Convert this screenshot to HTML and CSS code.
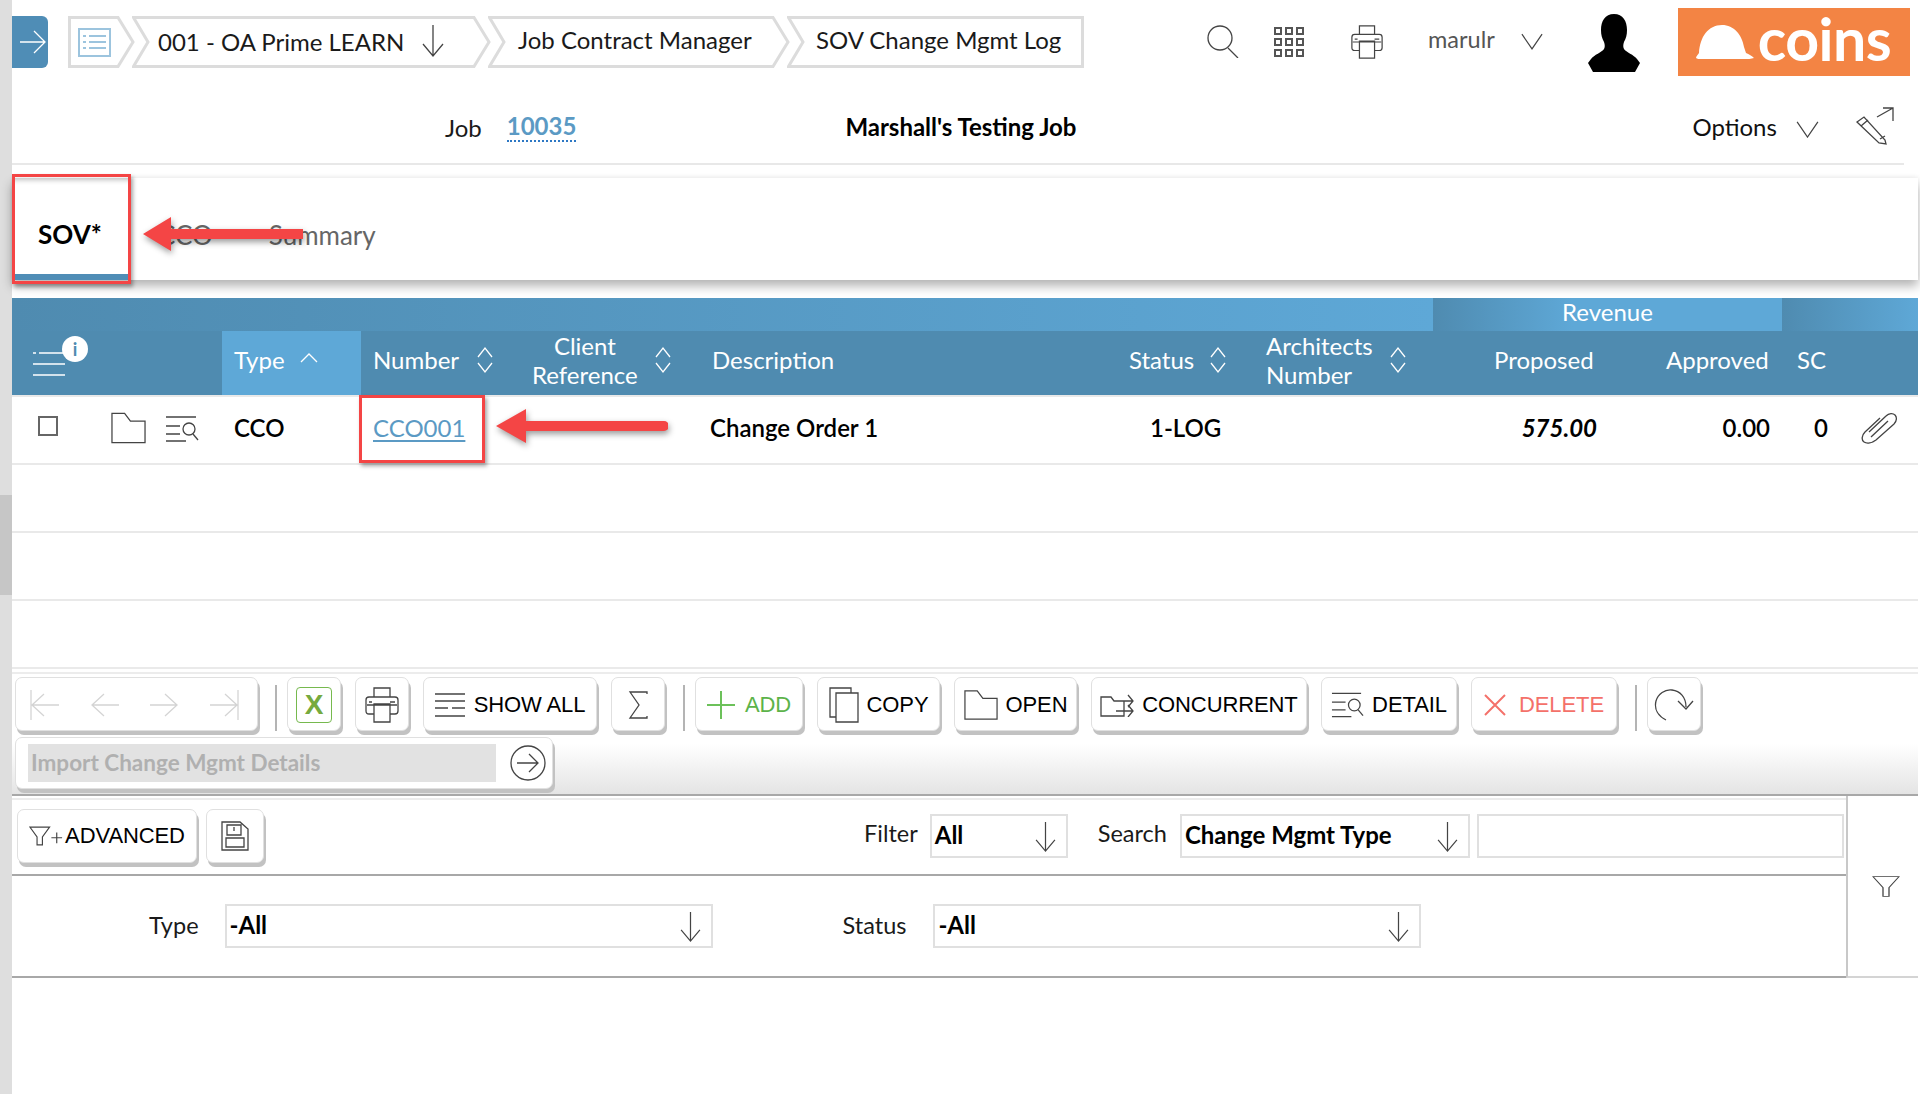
FILE: index.html
```html
<!DOCTYPE html>
<html lang="en">
<head>
<meta charset="utf-8">
<title>SOV Change Mgmt Log</title>
<link rel="stylesheet" href="styles.css">
</head>
<body>
<svg class="defs" width="0" height="0" aria-hidden="true">
  <symbol id="i-down" viewBox="0 0 24 34"><path d="M12 1v31M2 20l10 12 10-12"/></symbol>
  <symbol id="i-chev" viewBox="0 0 24 18"><path d="M1 1l11 16L23 1"/></symbol>
  <symbol id="i-sort" viewBox="0 0 18 28"><path d="M2 11l7-9 7 9M2 17l7 9 7-9"/></symbol>
  <symbol id="i-print" viewBox="0 0 36 36"><path d="M10 10V1h16v9M2 24V13q0-3 3-3h26q3 0 3 3v11q0 3-3 3h-5M10 27H5q-3 0-3-3M10 17h16v18H10zM5 15h3M26 15h5M3 18h30"/></symbol>
  <symbol id="i-detail" viewBox="0 0 34 26"><path d="M1 1h30M1 10h14M1 18h14M1 25h20"/><circle cx="24" cy="13" r="6"/><path d="M28 18l5 6"/></symbol>
  <symbol id="i-folder" viewBox="0 0 36 32"><path d="M1 1h13l6 8h15v22H1z"/></symbol>
  <symbol id="i-funnel" viewBox="0 0 28 36"><path d="M1 1h26L17 20v15h-6V20z"/></symbol>
</svg>
<div class="app">
  <aside class="rail"><div class="rail-thumb"></div></aside>
  <main class="main">
    <header class="topbar">
      <button class="menu-toggle"><svg class="ico" width="26" height="24" viewBox="0 0 26 24"><path class="white" d="M0 12h25M14 1l11 11-11 11"/></svg></button>
      <nav class="crumbs">
        <div class="crumb crumb-home">
          <svg class="crumb-shape" viewBox="0 0 67 52"><path d="M1.500 1.500H50L65 26 50 50.500H1.500z"/></svg>
          <svg class="ico list-ico" width="33" height="29" viewBox="0 0 33 29"><path class="blue" d="M1 1h31v27H1zM5 8h3M11 8h17M5 14h3M11 14h17M5 20h3M11 20h17"/></svg>
        </div>
        <div class="crumb crumb-job">
          <svg class="crumb-shape" viewBox="0 0 359 52"><path d="M1.500 1.500H342L357 26 342 50.500H1.500L16 26z"/></svg>
          <span class="crumb-text">001 - OA Prime LEARN</span>
          <svg class="ico down-sm"><use href="#i-down"/></svg>
        </div>
        <div class="crumb crumb-mgr">
          <svg class="crumb-shape" viewBox="0 0 302 52"><path d="M1.500 1.500H285L300 26 285 50.500H1.500L16 26z"/></svg>
          <span class="crumb-text">Job Contract Manager</span>
        </div>
        <div class="crumb crumb-log">
          <svg class="crumb-shape" viewBox="0 0 297 52"><path d="M1.500 1.500H295.500V50.500H1.500L16 26z"/></svg>
          <span class="crumb-text">SOV Change Mgmt Log</span>
        </div>
      </nav>
      <div class="top-tools">
        <svg class="ico tool-search" width="33" height="33" viewBox="0 0 33 33"><circle cx="13" cy="13" r="12"/><path d="M21 23l10 10"/></svg>
        <svg class="ico tool-grid" width="30" height="30" viewBox="0 0 30 30"><path class="heavy" d="M1 1h6v6H1zM12 1h6v6h-6zM23 1h6v6h-6zM1 12h6v6H1zM12 12h6v6h-6zM23 12h6v6h-6zM1 23h6v6H1zM12 23h6v6h-6zM23 23h6v6h-6z"/></svg>
        <svg class="ico tool-print" width="34" height="34"><use href="#i-print"/></svg>
        <span class="user-name">marulr</span>
        <svg class="ico tool-chev" width="22" height="17"><use href="#i-chev"/></svg>
        <svg class="avatar" width="52" height="58" viewBox="0 0 52 58"><path d="M26 0c9 0 13 7 13 16 0 5-1 8-3 12-1 3-1 5 0 7 2 3 10 6 13 10l3 4-5 9H5l-5-9 3-4c3-4 11-7 13-10 1-2 1-4 0-7-2-4-3-7-3-12C13 7 17 0 26 0z"/></svg>
        <div class="logo">
          <svg class="logo-hat" width="58" height="34" viewBox="0 0 58 34"><path d="M0 33c0-2 2-3 3-5C4 12 12 0 26 0c12 0 20 10 22 22l2 6c3 1 6 3 8 5-3 1-6 1-10 1H6c-3 0-5 0-6-1z"/></svg>
          <span class="logo-text">coins</span>
        </div>
      </div>
    </header>

    <section class="jobbar">
      <span class="job-label">Job</span>
      <a class="job-link">10035</a>
      <strong class="job-name">Marshall's Testing Job</strong>
      <span class="options">Options</span>
      <svg class="ico options-chev" width="23" height="17"><use href="#i-chev"/></svg>
      <svg class="ico pencil" width="40" height="38" viewBox="0 0 40 38"><path d="M1 15l7-5 21 23 1 4-7-1zM5 19l7-6M24 32l5-3M21 10L37 1M27 1h10v13"/></svg>
    </section>

    <section class="tabs">
      <div class="tab tab-active">SOV*</div>
      <div class="tab tab-cco">CCO</div>
      <div class="tab tab-summary">Summary</div>
    </section>

    <section class="grid">
      <div class="band">
        <div class="band-left"></div>
        <div class="band-rev">Revenue</div>
        <div class="band-right"></div>
      </div>
      <div class="cols head">
        <div class="c-icons"><svg class="ico settings" width="34" height="26" viewBox="0 0 34 26"><path class="white" d="M1 2h3M7 2h26M1 13h32M1 24h32"/></svg><span class="info">i</span></div>
        <div class="c-type sorted">Type<svg class="ico sort-up" width="18" height="10" viewBox="0 0 18 10"><path class="white" d="M1 9l8-8 8 8"/></svg></div>
        <div class="c-num">Number<svg class="ico sort"><use class="white" href="#i-sort"/></svg></div>
        <div class="c-client"><span class="two-line center">Client<br>Reference</span><svg class="ico sort"><use class="white" href="#i-sort"/></svg></div>
        <div class="c-desc">Description</div>
        <div class="c-status">Status<svg class="ico sort"><use class="white" href="#i-sort"/></svg></div>
        <div class="c-arch"><span class="two-line">Architects<br>Number</span><svg class="ico sort"><use class="white" href="#i-sort"/></svg></div>
        <div class="c-prop">Proposed</div>
        <div class="c-appr">Approved</div>
        <div class="c-sc">SC</div>
        <div class="c-clip"></div>
      </div>
      <div class="cols row">
        <div class="c-icons">
          <span class="check"></span>
          <svg class="ico row-folder" width="35" height="32"><use href="#i-folder"/></svg>
          <svg class="ico row-detail" width="34" height="26"><use href="#i-detail"/></svg>
        </div>
        <div class="c-type">CCO</div>
        <div class="c-num"><a class="row-link">CCO001</a></div>
        <div class="c-client"></div>
        <div class="c-desc cell-desc">Change Order 1</div>
        <div class="c-status cell-status">1-LOG</div>
        <div class="c-arch"></div>
        <div class="c-prop cell-num cell-italic">575.00</div>
        <div class="c-appr cell-num">0.00</div>
        <div class="c-sc cell-num">0</div>
        <div class="c-clip"><svg class="ico clip" width="38" height="32" viewBox="0 0 38 32"><path d="M9 20L26 4c3-3 7-3 9-1s2 6-1 9L16 28c-4 3-9 4-12 2s-2-7 1-10L20 6M11 25L28 9"/></svg></div>
      </div>
      <div class="row row-empty"></div>
      <div class="row row-empty"></div>
      <div class="row row-empty"></div>
    </section>

    <section class="toolbar">
      <div class="tool-row">
        <div class="btn nav-group">
          <svg class="ico muted" width="30" height="30" viewBox="0 0 30 30"><path d="M1 0v30M29 15H2M14 4L2 15l12 11"/></svg>
          <svg class="ico muted" width="30" height="30" viewBox="0 0 30 30"><path d="M29 15H2M14 4L2 15l12 11"/></svg>
          <svg class="ico muted" width="30" height="30" viewBox="0 0 30 30"><path d="M1 15h27M16 4l12 11-12 11"/></svg>
          <svg class="ico muted" width="30" height="30" viewBox="0 0 30 30"><path d="M29 0v30M1 15h27M16 4l12 11-12 11"/></svg>
        </div>
        <span class="sep"></span>
        <div class="btn btn-icon"><span class="excel">X</span></div>
        <div class="btn btn-icon"><svg class="ico" width="36" height="36"><use href="#i-print"/></svg></div>
        <div class="btn btn-show"><svg class="ico" width="30" height="24" viewBox="0 0 30 24"><path d="M0 1h30M0 8h30M0 15h13M17 15h13M0 23h30"/></svg>SHOW ALL</div>
        <div class="btn btn-icon"><svg class="ico" width="20" height="28" viewBox="0 0 20 28"><path d="M19 3V1H2l9 13L2 27h17v-2"/></svg></div>
        <span class="sep"></span>
        <div class="btn btn-add"><svg class="ico" width="28" height="28" viewBox="0 0 28 28"><path class="green" d="M14 0v28M0 14h28"/></svg>ADD</div>
        <div class="btn btn-copy"><svg class="ico" width="30" height="36" viewBox="0 0 30 36"><path d="M7 30H1V1h21v5M7 6h22v29H7z"/></svg>COPY</div>
        <div class="btn btn-open"><svg class="ico" width="34" height="32"><use href="#i-folder"/></svg>OPEN</div>
        <div class="btn btn-conc"><svg class="ico" width="34" height="24" viewBox="0 0 34 24"><path d="M1 4h10l3 4h10v15H1zM16 8h17M28 2l5 6-5 6M16 18h17M28 12l5 6-5 6"/></svg>CONCURRENT</div>
        <div class="btn btn-detail"><svg class="ico" width="33" height="26"><use href="#i-detail"/></svg>DETAIL</div>
        <div class="btn btn-delete"><svg class="ico" width="22" height="22" viewBox="0 0 22 22"><path class="red" d="M1 1l20 20M21 1L1 21"/></svg>DELETE</div>
        <span class="sep"></span>
        <div class="btn btn-icon"><svg class="ico" width="40" height="32" viewBox="0 0 40 32"><path d="M12 31C4 27 0 20 2 12 4 5 11 0 18 1c8 1 14 7 14 17M24 12l8 8 7-8"/></svg></div>
      </div>
      <div class="btn import">
        <div class="import-input">Import Change Mgmt Details</div>
        <svg class="ico" width="36" height="36" viewBox="0 0 36 36"><ellipse cx="18" cy="18" rx="17" ry="17"/><path d="M7 18h21M19 9l9 9-9 9"/></svg>
      </div>
    </section>

    <section class="filters">
      <div class="filters-body">
        <div class="filter-row">
          <div class="btn btn-adv"><svg class="ico" width="34" height="22" viewBox="0 0 38 22"><path d="M1 1h22l-8 11v9h-6v-9zM25 13h12M31 7v12"/></svg>ADVANCED</div>
          <div class="btn btn-save"><svg class="ico" width="28" height="30" viewBox="0 0 28 30"><path d="M1 1h18l8 7v21H1zM6 4h14v10H6zM13 6v4M5 17h18v9H5z"/></svg></div>
          <label class="f-label f-label-filter">Filter</label>
          <div class="select s-filter"><span>All</span><svg class="ico down"><use href="#i-down"/></svg></div>
          <label class="f-label f-label-search">Search</label>
          <div class="select s-search"><span>Change Mgmt Type</span><svg class="ico down"><use href="#i-down"/></svg></div>
          <div class="select s-text"></div>
        </div>
        <div class="type-row">
          <label class="f-label f-label-type">Type</label>
          <div class="select s-wide"><span>-All</span><svg class="ico down"><use href="#i-down"/></svg></div>
          <label class="f-label f-label-status">Status</label>
          <div class="select s-wide"><span>-All</span><svg class="ico down"><use href="#i-down"/></svg></div>
        </div>
      </div>
      <div class="filters-side"><svg class="ico" width="28" height="21" viewBox="0 0 28 36" preserveAspectRatio="none"><use href="#i-funnel"/></svg></div>
    </section>
  </main>

  <div class="mark mark-tab"></div>
  <div class="mark mark-num"></div>
  <svg class="arrow arrow-tab" width="160" height="36" viewBox="0 0 160 36"><path d="M0 18L28 1v12h132v10H28v12z"/></svg>
  <svg class="arrow arrow-num" width="172" height="36" viewBox="0 0 172 36"><path d="M0 18L30 1v12h138a5 5 0 010 10H30v12z"/></svg>
</div>
</body>
</html>
```

FILE: styles.css
```css
* { box-sizing: border-box; }
html, body { margin: 0; padding: 0; background: #fff; }
body { font-family: "Lato", "Liberation Sans", sans-serif; font-size: 24px; color: #000; overflow: hidden; }
.defs { position: absolute; }
.app { position: relative; display: flex; width: 1920px; height: 1094px; overflow: hidden; }
.rail { width: 12px; flex: none; background: #dedede; padding-top: 495px; }
.rail-thumb { height: 100px; background: #c6c6c6; }
.main { width: 1906px; flex: none; }

.ico { display: block; flex: none; fill: none; stroke: #444; stroke-width: 1.3; }
.ico path, .ico circle, .ico ellipse, .ico use { fill: none; }
.ico .white { stroke: #fff; }
.ico .blue { stroke: #9cc4de; stroke-width: 2; }
.ico .green { stroke: #6cc15a; stroke-width: 2; }
.ico .red { stroke: #f4716a; stroke-width: 2; }
.ico .heavy { stroke: #555; stroke-width: 2; }
.ico.muted { stroke: #d4d4d4; }

/* top bar */
.topbar { display: flex; height: 84px; align-items: flex-start; }
.menu-toggle { width: 36px; height: 52px; margin-top: 16px; padding: 0 0 0 8px; border: 0; border-radius: 0 6px 6px 0; background: #4f8db6; display: flex; align-items: center; }
.crumbs { display: flex; margin: 16px 0 0 20px; }
.crumb { position: relative; height: 52px; display: flex; align-items: center; margin-left: -3px; flex: none; }
.crumb-shape { position: absolute; left: 0; top: 0; width: 100%; height: 100%; }
.crumb-shape path { fill: #fff; stroke: #dcdcdc; stroke-width: 3; }
.crumb-text { position: relative; color: #1a1a1a; font-size: 24px; white-space: nowrap; }
.crumb-home { width: 67px; margin-left: 0; padding-left: 10px; }
.crumb-job { width: 359px; padding: 0 0 2px 26px; }
.crumb-mgr { width: 302px; padding: 0 0 6px 30px; }
.crumb-log { width: 297px; padding: 0 0 6px 29px; }
.list-ico { position: relative; }
.down-sm { position: relative; width: 24px; height: 34px; margin-left: 17px; }

.top-tools { display: flex; align-items: flex-start; margin-left: 123px; }
.tool-search { margin: 25px 34px 0 0; }
.tool-grid { margin: 27px 46px 0 0; }
.tool-print { margin: 25px 44px 0 0; }
.user-name { margin: 23px 26px 0 0; color: #555; font-size: 23.500px; line-height: 32px; }
.tool-chev { margin: 33px 45px 0 0; }
.avatar { flex: none; margin: 14px 38px 0 0; fill: #000; }
.logo { flex: none; display: flex; align-items: center; width: 232px; height: 68px; margin-top: 8px; padding-left: 18px; background: #f38444; color: #fff; }
.logo-hat { fill: #fff; }
.logo-text { margin: -6px 0 0 4px; font-size: 59px; font-weight: 700; line-height: 60px; letter-spacing: -0.500px; }

/* job bar */
.jobbar { display: flex; align-items: center; height: 81px; margin-right: 14px; padding-top: 7px; border-bottom: 2px solid #e8e8e8; }
.job-label { margin-left: 433px; color: #1a1a1a; }
.job-link { margin-left: 25px; color: #5b9ac4; font-weight: 700; font-size: 24px; border-bottom: 2px dotted #2d78c4; line-height: 28px; }
.job-name { margin: -1px 0 0 269px; font-weight: 700; font-size: 24px; }
.options { margin: -1px 0 0 616px; color: #111; }
.options-chev { margin: 4px 0 0 19px; }
.pencil { margin: -2px 0 0 37px; }

/* tabs */
.tabs { display: flex; align-items: stretch; height: 102px; margin-top: 13px; background: #fff; box-shadow: 0 6px 10px rgba(0, 0, 0, .3), 0 -2px 3px rgba(0, 0, 0, .03); }
.tab { display: flex; align-items: center; padding-top: 12px; color: #666; font-size: 26px; }
.tab-active { width: 118px; padding-top: 16px; padding-left: 26px; margin-right: 28px; border-bottom: 6px solid #4f8db6; color: #000; font-weight: 700; box-shadow: inset 0 5px 5px -3px rgba(0, 0, 0, .25); }
.tab-cco { margin-right: 56px; }

/* grid */
.grid { margin-top: 18px; }
.band { display: flex; height: 33px; color: #fff; text-align: center; line-height: 28px; font-size: 24px; }
.band-left { width: 1421px; background: linear-gradient(90deg, #4f8bb0, #5ea8d7); }
.band-rev { width: 349px; background: linear-gradient(90deg, #4f8bb0, #5ea8d7 40%); }
.band-right { flex: 1; background: linear-gradient(90deg, #4f8bb0, #5ea8d7); }
.cols { display: grid; grid-template-columns: 210px 139px 154px 185px 410px 140px 230px 130px 170px 60px 78px; grid-template-rows: 1fr; align-items: stretch; }
.cols > div { display: flex; align-items: center; min-height: 0; }
.head { height: 64px; background: #4f8bb0; color: #fff; font-size: 24px; }
.head > div { padding-bottom: 7px; }
.head .c-type { padding-left: 12px; background: #5ea8d7; }
.head .c-num { padding-left: 12px; }
.head .c-client { padding-left: 17px; }
.head .c-desc { padding-left: 12px; }
.head .c-status { padding-left: 19px; }
.head .c-arch { padding-left: 16px; }
.head .c-prop { padding-left: 14px; }
.head .c-appr { padding-left: 56px; }
.head .c-sc { padding-left: 17px; }
.two-line { line-height: 29px; padding-top: 1px; }
.center { text-align: center; }
.sort { width: 18px; height: 28px; margin-left: 17px; }
.c-status .sort { margin-left: 15px; }
.c-client .sort, .c-arch .sort { margin-left: 16px; }
.sort-up { margin: -4px 0 0 15px; }
.head .c-icons { position: relative; padding-left: 20px; }
.settings { margin-top: 8px; }
.info { position: absolute; left: 50px; top: 5px; width: 26px; height: 26px; border-radius: 50%; background: #fff; color: #4f8bb0; text-align: center; font-size: 18px; font-weight: 700; line-height: 26px; }

.row { height: 68px; border-top: 2px solid #e9e9e9; font-size: 24px; }
.cols.row { font-weight: 600; }
.cols.row > div { padding-bottom: 6px; }
.row .c-icons { padding-left: 26px; }
.row .c-type { padding-left: 12px; }
.row .c-num { padding-left: 12px; }
.check { display: block; width: 20px; height: 20px; margin: -2px 53px 0 0; border: 2px solid #666; }
.row-folder { margin: 2px 19px 0 0; stroke: #444; }
.row-detail { margin-top: 4px; }
.row-link { color: #5b9ac4; font-weight: 400; text-decoration: underline; text-underline-offset: 3px; }
.cols > .cell-desc { padding-left: 10px; }
.cols > .cell-status { padding-left: 40px; }
.cols > .cell-num { justify-content: flex-end; }
.cols > .c-prop.cell-num { padding-right: 13px; }
.cols > .c-appr.cell-num { padding-right: 10px; }
.cols > .c-sc.cell-num { padding-right: 12px; }
.cols.row > .cell-italic { font-style: italic; font-weight: 700; }
.row .c-clip { padding-left: 20px; }
.clip { margin-top: 2px; }

/* toolbar */
.toolbar { height: 129px; padding: 8px 0 0 3px; border-top: 2px solid #eaeaea; border-bottom: 2px solid #a8a8a8; box-shadow: inset 0 3px 0 #fff, inset 0 5px 0 #ececec; background: linear-gradient(#fff 60%, #e4e4e4); }
.tool-row { display: flex; align-items: flex-start; height: 58px; }
.btn { display: flex; align-items: center; justify-content: center; height: 54px; background: #fff; border-radius: 7px; border: 1px solid #e0e0e0; box-shadow: 2px 4px 0 #c2c2c2; font-family: "Liberation Sans", sans-serif; font-size: 22px; letter-spacing: -0.100px; white-space: nowrap; color: #000; flex: none; }
.sep { width: 2px; height: 46px; margin: 8px 10px 0 4px; background: #b4b4b4; flex: none; }
.tool-row .btn { margin-right: 14px; padding-top: 1px; }
.nav-group { width: 243px; justify-content: space-between; padding: 0 18px 0 14px; }
.nav-group + .sep { margin-left: 3px; }
.btn-icon { width: 54px; }
.excel { width: 36px; height: 36px; border: 1.500px solid #76b94e; border-radius: 4px; color: #76aa3e; font: 700 28px/33px "Liberation Sans", sans-serif; text-align: center; }
.btn-show { width: 174px; gap: 9px; }
.btn-add { width: 108px; gap: 10px; color: #5cb34a; }
.btn-copy { width: 123px; gap: 8px; }
.btn-open { width: 123px; gap: 8px; }
.btn-conc { width: 216px; gap: 8px; }
.btn-detail { width: 136px; gap: 8px; }
.btn-delete { width: 146px; gap: 13px; color: #f4716a; }
.import { width: 538px; height: 52px; margin-top: 2px; justify-content: flex-start; padding-left: 12px; gap: 14px; }
.import-input { width: 468px; height: 38px; padding-left: 3px; background: #e2e2e2; color: #b0b0b0; font-family: "Lato", sans-serif; font-size: 22.500px; font-weight: 700; letter-spacing: 0; line-height: 37px; }

/* filters */
.filters { display: flex; height: 182px; }
.filters-body { width: 1834px; flex: none; padding-top: 2px; }
.filter-row { display: flex; align-items: center; height: 78px; padding: 0 0 3px 5px; border-top: 2px solid #ececec; border-bottom: 2px solid #a8a8a8; }
.btn-adv { width: 180px; height: 54px; gap: 2px; }
.btn-save { width: 58px; height: 54px; margin-left: 9px; }
.f-label { font-size: 23.500px; color: #1a1a1a; flex: none; margin-top: -5px; }
.f-label-filter { margin-left: 600px; }
.f-label-search { margin-left: 30px; }
.select { display: flex; align-items: center; justify-content: space-between; height: 44px; padding: 0 8px 0 3px; border: 2px solid #e0e0e0; background: #fff; font-weight: 700; font-size: 24px; flex: none; }
.select span { margin-top: -3px; }
.down { width: 25px; height: 32px; margin-top: 2px; }
.s-filter { width: 138px; margin-left: 12px; }
.s-search { width: 290px; margin-left: 13px; }
.s-text { width: 367px; margin-left: 7px; }
.type-row { display: flex; align-items: center; height: 102px; border-bottom: 2px solid #a8a8a8; }
.type-row .f-label { margin-top: -2px; }
.type-row .f-label-type { margin-left: 137px; }
.s-wide { width: 488px; }
.f-label-type + .s-wide { margin-left: 26px; }
.type-row .f-label-status { margin-left: 130px; }
.f-label-status + .s-wide { margin-left: 27px; }
.filters-side { width: 72px; height: 182px; display: flex; justify-content: center; padding: 80px 0 0 5px; border-left: 2px solid #c8c8c8; border-bottom: 2px solid #d4d4d4; }

/* annotations laid over the screenshot */
.mark { position: absolute; border: 3px solid #f44545; box-shadow: 2px 3px 4px rgba(0, 0, 0, .35); }
.mark-tab { left: 12px; top: 174px; width: 119px; height: 110px; }
.mark-num { left: 359px; top: 395px; width: 126px; height: 68px; }
.arrow { position: absolute; fill: #f44545; filter: drop-shadow(1px 3px 3px rgba(0, 0, 0, .4)); }
.arrow-tab { left: 143px; top: 216px; }
.arrow-num { left: 496px; top: 408px; }
```
